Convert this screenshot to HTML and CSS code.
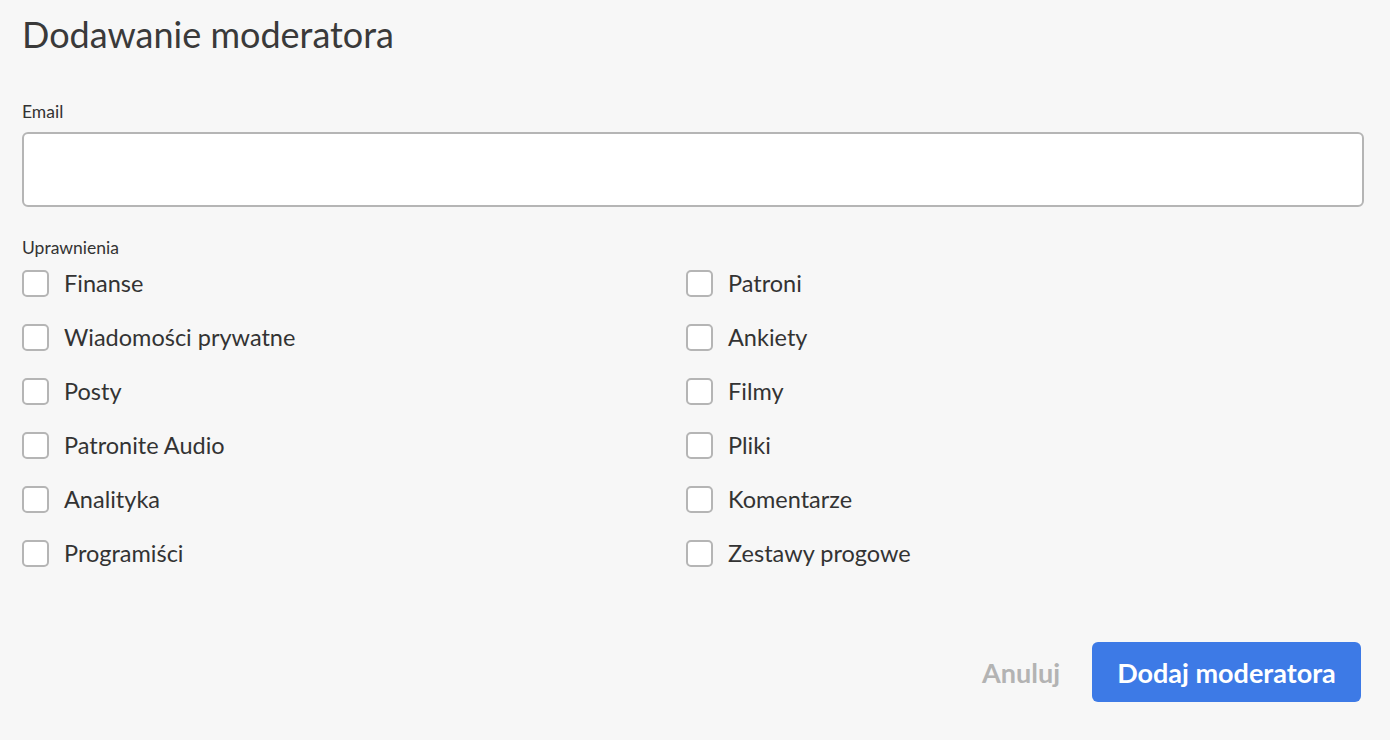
FILE: index.html
```html
<!DOCTYPE html>
<html lang="pl">
<head>
<meta charset="utf-8">
<title>Dodawanie moderatora</title>
<link rel="stylesheet" href="styles.css">
</head>
<body>
<div class="page">
  <h1 class="title">Dodawanie moderatora</h1>
  <label class="field-label" for="email">Email</label>
  <input class="text-input" id="email" type="text">
  <div class="field-label perms-label">Uprawnienia</div>
  <div class="perms">
    <label class="perm"><span class="box"></span><span>Finanse</span></label>
    <label class="perm"><span class="box"></span><span>Patroni</span></label>
    <label class="perm"><span class="box"></span><span>Wiadomości prywatne</span></label>
    <label class="perm"><span class="box"></span><span>Ankiety</span></label>
    <label class="perm"><span class="box"></span><span>Posty</span></label>
    <label class="perm"><span class="box"></span><span>Filmy</span></label>
    <label class="perm"><span class="box"></span><span>Patronite Audio</span></label>
    <label class="perm"><span class="box"></span><span>Pliki</span></label>
    <label class="perm"><span class="box"></span><span>Analityka</span></label>
    <label class="perm"><span class="box"></span><span>Komentarze</span></label>
    <label class="perm"><span class="box"></span><span>Programiści</span></label>
    <label class="perm"><span class="box"></span><span>Zestawy progowe</span></label>
  </div>
  <div class="actions">
    <button class="btn-cancel" type="button">Anuluj</button>
    <button class="btn-primary" type="button">Dodaj moderatora</button>
  </div>
</div>
</body>
</html>
```
FILE: styles.css
```css
html, body {
  margin: 0;
  padding: 0;
  background: #f7f7f7;
}
body {
  font-family: Lato, "Open Sans", "Liberation Sans", sans-serif;
  color: #333333;
}
.page {
  padding: 12px 26px 0 22px;
  display: flex;
  flex-direction: column;
}
.title {
  margin: 0;
  font-size: 36px;
  font-weight: 400;
  color: #3a3a3a;
  line-height: 44px;
}
.field-label {
  font-size: 17.5px;
  color: #333333;
  line-height: 22px;
}
.title + .field-label {
  margin-top: 45px;
}
.text-input {
  margin-top: 9px;
  box-sizing: border-box;
  height: 75px;
  width: 100%;
  border: 2px solid #b5b5b5;
  border-radius: 6px;
  background: #ffffff;
  outline: none;
  font-size: 20px;
  padding: 0 14px;
}
.perms-label {
  margin-top: 30px;
}
.perms {
  margin-top: -3px;
  display: grid;
  grid-template-columns: 664px 1fr;
}
.perm {
  display: flex;
  align-items: center;
  gap: 15px;
  height: 54px;
  font-size: 23.5px;
  color: #333333;
}
.box {
  box-sizing: border-box;
  width: 27px;
  height: 27px;
  border: 2px solid #b5b5b5;
  border-radius: 5px;
  background: #ffffff;
  flex: none;
}
.actions {
  margin-top: 62px;
  display: flex;
  justify-content: flex-end;
  align-items: center;
  gap: 32px;
  padding-right: 3px;
}
.btn-cancel {
  border: none;
  background: none;
  font-family: inherit;
  font-size: 27px;
  font-weight: 700;
  color: #b3b3b3;
  padding: 0;
}
.btn-primary {
  border: none;
  background: #3d7ae6;
  color: #ffffff;
  font-family: inherit;
  font-size: 27px;
  font-weight: 700;
  height: 60px;
  width: 269px;
  border-radius: 6px;
  padding: 0;
}
```
